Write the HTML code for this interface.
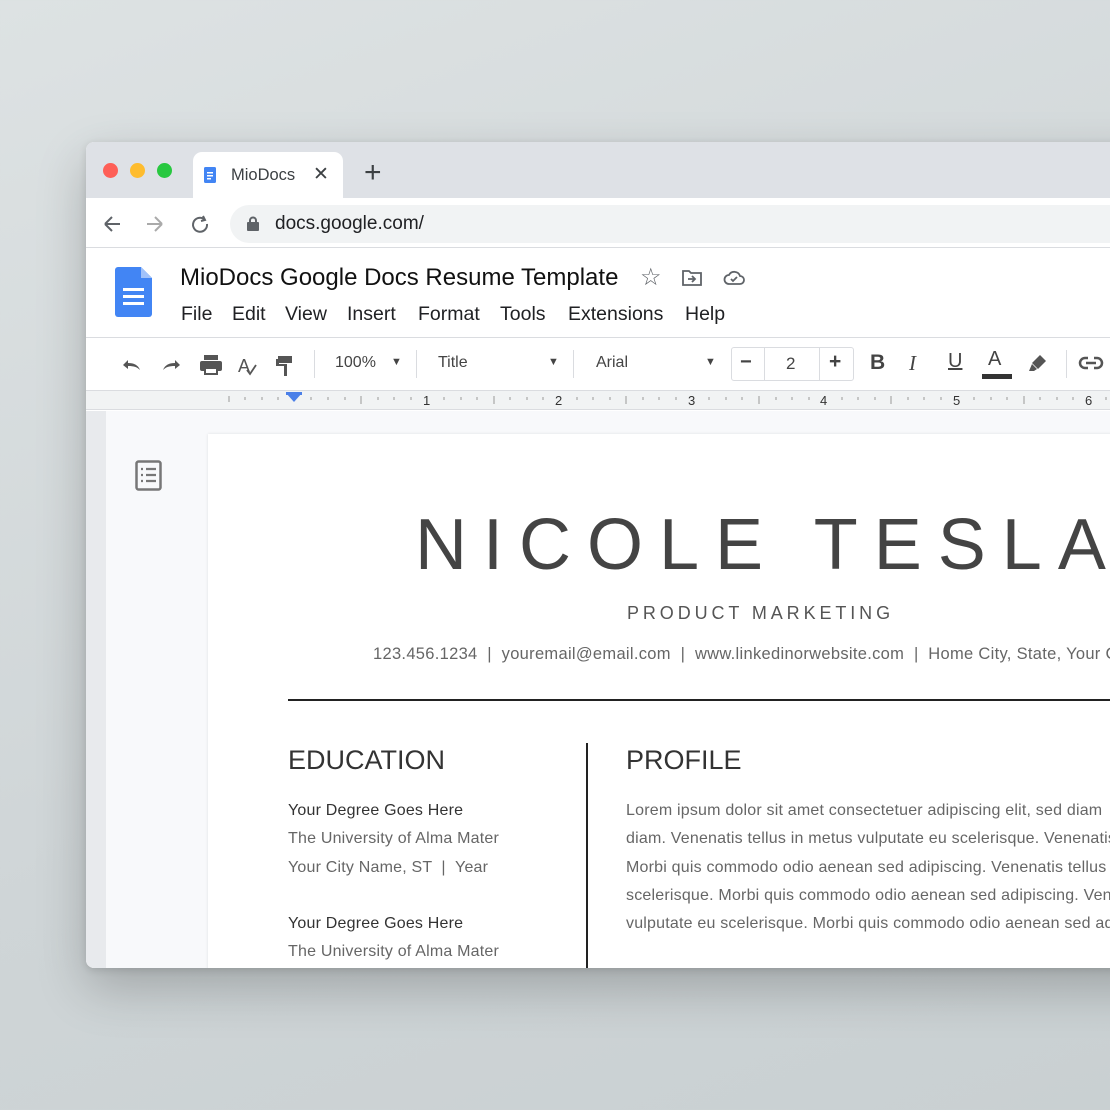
<!DOCTYPE html>
<html><head><style>
*{margin:0;padding:0;box-sizing:border-box}
body{width:1110px;height:1110px;overflow:hidden;background:linear-gradient(160deg,#dde2e3,#cfd5d7 60%,#c9d0d2);font-family:"Liberation Sans",sans-serif;position:relative}
.win{position:absolute;left:86px;top:142px;width:1100px;height:826px;background:#fff;border-radius:8px 0 0 8px;overflow:hidden;box-shadow:0 20px 50px rgba(0,0,0,.22),0 2px 8px rgba(0,0,0,.12)}
.abs{position:absolute}
.tabbar{left:0;top:0;width:1100px;height:56px;background:#dee1e6}
.dot{width:15px;height:15px;border-radius:50%;top:21px}
.tab{left:107px;top:10px;width:150px;height:46px;background:#fff;border-radius:9px 9px 0 0}
.txt{white-space:nowrap}
.mi{position:absolute;top:161px;font-size:19.5px;color:#202124;white-space:nowrap}
.tb{color:#444}
.sep{width:1px;height:28px;background:#dadce0;top:350px}
.ruler{left:0;top:248px;width:1100px;height:20px;background:#f1f3f4;border-top:1px solid #dadce0;border-bottom:1px solid #dadce0}
.body{color:#666;font-size:16px;line-height:28.3px;letter-spacing:0.2px}
</style></head><body>
<div class="win">
 <div class="abs tabbar"></div>
 <div class="abs dot" style="left:17px;background:#fe5f57"></div>
 <div class="abs dot" style="left:44px;background:#febc2e"></div>
 <div class="abs dot" style="left:71px;background:#28c840"></div>
 <div class="abs tab"></div>
 <svg class="abs" style="left:118px;top:25px" width="12" height="16"><rect width="12" height="16" rx="1.5" fill="#4285f4"/><rect x="3" y="5" width="6" height="1.5" fill="#fff"/><rect x="3" y="8" width="6" height="1.5" fill="#fff"/><rect x="3" y="11" width="4" height="1.5" fill="#fff"/></svg>
 <div class="abs txt" style="left:145px;top:24px;font-size:16.5px;color:#3c4043">MioDocs</div>
 <div class="abs txt" style="left:227px;top:21px;font-size:19px;color:#3c4043">✕</div>
 <div class="abs txt" style="left:278px;top:14px;font-size:30px;color:#3c4043;font-weight:300">+</div>
 <div class="abs" style="left:0;top:56px;width:1100px;height:50px;background:#fff;border-bottom:1px solid #dadce0"></div>
 <svg class="abs" style="left:17px;top:72px" width="120" height="20" fill="none" stroke-width="2"><path d="M2 10H17M2 10L9 3M2 10L9 17" stroke="#5f6368"/><path d="M59 10H44M59 10L52 3M59 10L52 17" stroke="#aaa"/><path d="M101 5A7 7 0 1 0 104 10" stroke="#5f6368"/><path d="M100 2L102 6L98 7" stroke="#5f6368"/></svg>
 <div class="abs" style="left:144px;top:63px;width:980px;height:38px;border-radius:19px;background:#f1f3f4"></div>
 <svg class="abs" style="left:161px;top:74px" width="12" height="15"><path d="M3 7V4.5a3 3 0 0 1 6 0V7" stroke="#5f6368" stroke-width="2" fill="none"/><rect y="6" width="12" height="9" rx="1" fill="#5f6368"/></svg>
 <div class="abs txt" style="left:189px;top:71px;font-size:19px;color:#202124">docs.google.com/</div>
 <svg class="abs" style="left:29px;top:125px" width="37" height="50"><path d="M3 0H26L37 11V47a3 3 0 0 1-3 3H3a3 3 0 0 1-3-3V3a3 3 0 0 1 3-3z" fill="#4285f4"/><path d="M26 0V11H37z" fill="#a1c2fa"/><rect x="8" y="21" width="21" height="3" fill="#fff"/><rect x="8" y="28" width="21" height="3" fill="#fff"/><rect x="8" y="35" width="21" height="3" fill="#fff"/></svg>
 <div class="abs txt" style="left:94px;top:122px;font-size:24px;color:#111">MioDocs Google Docs Resume Template</div>
 <div class="abs txt" style="left:554px;top:121px;font-size:24px;color:#5f6368">☆</div>
 <svg class="abs" style="left:596px;top:126px" width="64" height="20" fill="none" stroke="#5f6368" stroke-width="1.8"><path d="M1 3h6l2 2h10v12H1z"/><path d="M6 11h7M10 8l3 3-3 3"/><path d="M47 16h11a4 4 0 0 0 0-8 6 6 0 0 0-11-1 4.5 4.5 0 0 0 0 9z"/><path d="M49 11l2 2 4-4"/></svg>
 <div class="mi" style="left:95px">File</div>
 <div class="mi" style="left:146px">Edit</div>
 <div class="mi" style="left:199px">View</div>
 <div class="mi" style="left:261px">Insert</div>
 <div class="mi" style="left:332px">Format</div>
 <div class="mi" style="left:414px">Tools</div>
 <div class="mi" style="left:482px">Extensions</div>
 <div class="mi" style="left:599px">Help</div>
 <div class="abs" style="left:0;top:195px;width:1100px;height:1px;background:#dadce0"></div>
 <svg class="abs" style="left:34px;top:208px" width="190" height="28" fill="#555"><path d="M3 13l5-5v3c6 0 10 2 12 7-3-3-6-4-12-4v3z" transform="translate(0,2)"/><path d="M60 13l-5-5v3c-6 0-10 2-12 7 3-3 6-4 12-4v3z" transform="translate(0,2)"/><rect x="80" y="11" width="22" height="10" rx="2"/><rect x="84" y="5" width="14" height="5"/><rect x="85" y="18" width="12" height="6" fill="#fff" stroke="#555" stroke-width="2"/><text x="118" y="22" font-size="18" font-family="Liberation Sans">A</text><path d="M127 20l3 4 6-9" stroke="#555" stroke-width="1.8" fill="none"/><rect x="158" y="6" width="14" height="7"/><path d="M158 9h-2v7h8v10h3V14h-8V9z"/></svg>
 <div class="abs sep" style="left:228px;top:208px"></div>
 <div class="abs txt tb" style="left:249px;top:212px;font-size:16px">100%</div>
 <div class="abs txt tb" style="left:305px;top:214px;font-size:11px">▼</div>
 <div class="abs sep" style="left:330px;top:208px"></div>
 <div class="abs txt tb" style="left:352px;top:212px;font-size:16px">Title</div>
 <div class="abs txt tb" style="left:462px;top:214px;font-size:11px">▼</div>
 <div class="abs sep" style="left:487px;top:208px"></div>
 <div class="abs txt tb" style="left:510px;top:212px;font-size:16px">Arial</div>
 <div class="abs txt tb" style="left:619px;top:214px;font-size:11px">▼</div>
 <div class="abs" style="left:645px;top:205px;width:123px;height:34px;border:1px solid #dadce0;border-radius:3px"></div>
 <div class="abs" style="left:678px;top:205px;width:1px;height:34px;background:#dadce0"></div>
 <div class="abs" style="left:733px;top:205px;width:1px;height:34px;background:#dadce0"></div>
 <div class="abs txt tb" style="left:654px;top:209px;font-size:20px;font-weight:bold">−</div>
 <div class="abs txt tb" style="left:700px;top:212px;font-size:17px">2</div>
 <div class="abs txt tb" style="left:743px;top:208px;font-size:21px;font-weight:bold">+</div>
 <div class="abs txt tb" style="left:784px;top:209px;font-size:21px;font-weight:bold">B</div>
 <div class="abs txt tb" style="left:823px;top:209px;font-size:21px;font-style:italic;font-family:'Liberation Serif',serif">I</div>
 <div class="abs txt tb" style="left:862px;top:208px;font-size:20px;text-decoration:underline">U</div>
 <div class="abs txt tb" style="left:902px;top:206px;font-size:20px">A</div>
 <div class="abs" style="left:896px;top:232px;width:30px;height:5px;background:#333"></div>
 <svg class="abs" style="left:942px;top:210px" width="22" height="20" fill="#555"><path d="M12 3l6 6-8 8-6-6z"/><path d="M4 12l5 5-3 2H1z"/></svg>
 <div class="abs sep" style="left:980px;top:208px"></div>
 <svg class="abs" style="left:992px;top:213px" width="26" height="16" fill="none" stroke="#555" stroke-width="2.5"><path d="M10 3H7a5 5 0 0 0 0 10h3M16 3h3a5 5 0 0 1 0 10h-3M8 8h10"/></svg>
 <div class="abs ruler"></div>
 <svg class="abs" style="left:0;top:249px" width="1100" height="18" font-family="Liberation Sans" font-size="13" fill="#333">
  <g stroke="#999" stroke-width="1">
   <path d="M143 5v6M159 6v3M176 6v3M192 6v3M225 6v3M242 6v3M259 6v3M275 5v8M292 6v3M308 6v3M325 6v3M358 6v3M375 6v3M391 6v3M408 5v8M424 6v3M441 6v3M457 6v3M491 6v3M507 6v3M524 6v3M540 5v8M557 6v3M573 6v3M590 6v3M623 6v3M640 6v3M656 6v3M673 5v8M690 6v3M706 6v3M723 6v3M756 6v3M772 6v3M789 6v3M805 5v8M822 6v3M838 6v3M855 6v3M888 6v3M905 6v3M921 6v3M938 5v8M954 6v3M971 6v3M987 6v3M1020 6v3"/>
  </g>
  <text x="337" y="14">1</text><text x="469" y="14">2</text><text x="602" y="14">3</text><text x="734" y="14">4</text><text x="867" y="14">5</text><text x="999" y="14">6</text>
  <path d="M200 2h16l-8 9z" fill="#4a7fe8"/><rect x="200" y="1" width="16" height="3" fill="#4a7fe8"/>
 </svg>
 <div class="abs" style="left:0;top:269px;width:20px;height:560px;background:#e8eaed"></div>
 <div class="abs" style="left:20px;top:269px;width:1100px;height:560px;background:#f8f9fb"></div>
 <svg class="abs" style="left:49px;top:318px" width="27" height="31" fill="none" stroke="#777" stroke-width="2.5"><rect x="1.5" y="1.5" width="24" height="28" rx="2"/><path d="M6 9h2M11 9h10M6 15h2M11 15h10M6 21h2M11 21h10" stroke-width="2.2"/></svg>
 <div class="abs" style="left:122px;top:292px;width:1000px;height:540px;background:#fff;box-shadow:0 0 3px rgba(0,0,0,.1)"></div>
 <div class="abs txt" style="left:329px;top:362px;font-size:72px;color:#444;letter-spacing:16px">NICOLE TESLA</div>
 <div class="abs txt" style="left:541px;top:461px;font-size:18px;color:#555;letter-spacing:3.9px">PRODUCT MARKETING</div>
 <div class="abs txt" style="left:287px;top:503px;font-size:16.5px;color:#666;letter-spacing:0.3px">123.456.1234 &nbsp;| &nbsp;youremail@email.com &nbsp;| &nbsp;www.linkedinorwebsite.com &nbsp;| &nbsp;Home City, State, Your Country</div>
 <div class="abs" style="left:202px;top:557px;width:900px;height:2px;background:#222"></div>
 <div class="abs" style="left:500px;top:601px;width:2px;height:230px;background:#222"></div>
 <div class="abs txt" style="left:202px;top:603px;font-size:27px;color:#333">EDUCATION</div>
 <div class="abs txt" style="left:540px;top:603px;font-size:27px;color:#333">PROFILE</div>
 <div class="abs txt body" style="left:202px;top:655px"><span style="color:#333">Your Degree Goes Here</span><br>The University of Alma Mater<br>Your City Name, ST &nbsp;| &nbsp;Year<br><br><span style="color:#333">Your Degree Goes Here</span><br>The University of Alma Mater</div>
 <div class="abs txt body" style="left:540px;top:655px">Lorem ipsum dolor sit amet consectetuer adipiscing elit, sed diam<br>diam. Venenatis tellus in metus vulputate eu scelerisque. Venenatis<br>Morbi quis commodo odio aenean sed adipiscing. Venenatis tellus<br>scelerisque. Morbi quis commodo odio aenean sed adipiscing. Venenatis<br>vulputate eu scelerisque. Morbi quis commodo odio aenean sed adipiscing</div>
</div>
</body></html>
